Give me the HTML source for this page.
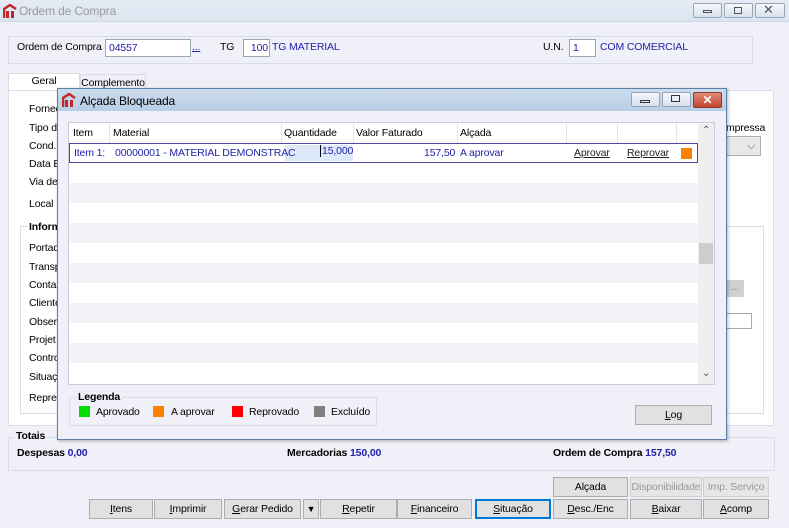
<!DOCTYPE html>
<html><head><meta charset="utf-8"><style>
*{box-sizing:border-box;margin:0;padding:0}
body{width:789px;height:528px;overflow:hidden;background:#f0f1f8;font-family:"Liberation Sans",sans-serif;font-size:10.5px;letter-spacing:-0.15px;color:#000;position:relative}
.a{position:absolute}
.blue{color:#2222aa}
.btn{position:absolute;height:20px;background:#e1e1e1;border:1px solid #adadad;text-align:center;line-height:18px;font-size:10.5px}
.btn.d{color:#9a9a9a;background:#e6e6e6;border-color:#cfcfcf}
.inp{position:absolute;background:#fff;border:1px solid #9aa;height:18px;line-height:16px;padding:0 3px}
.lbl{position:absolute}
.cb{position:absolute;width:21px;height:15px;border:1px solid #9aa5b8;border-radius:2px;background:linear-gradient(#f4f7fb,#d8e1ee)}
.logo{position:absolute;width:14px;height:14px}
</style></head><body>
<div class="a" style="left:0;top:0;width:789px;height:22px;background:linear-gradient(#e4ebf4,#dbe4f0);border-bottom:1px solid #d0d8e4"></div>
<svg class="logo" style="left:3px;top:4px" viewBox="0 0 14 14"><path d="M1 14V5L7 1l6 4" stroke="#c0282a" stroke-width="2.5" fill="none"/><rect x="3" y="7" width="3" height="7" fill="#c0282a"/><rect x="8" y="7" width="3" height="7" fill="#c0282a"/></svg>
<div class="a" style="left:19px;top:4px;font-size:12px;color:#9a9a9a">Ordem de Compra</div>
<div class="cb" style="left:693px;top:3px;width:29px"></div><div class="a" style="left:703px;top:10px;width:9px;height:3px;border:1px solid #555"></div>
<div class="cb" style="left:724px;top:3px;width:29px"></div><div class="a" style="left:734px;top:7px;width:8px;height:7px;border:1px solid #555"></div>
<div class="cb" style="left:755px;top:3px;width:30px"></div><div class="a" style="left:763px;top:2px;font-size:13px;color:#555">✕</div>

<div class="a" style="left:8px;top:36px;width:745px;height:28px;border:1px solid #dadde6"></div>
<div class="lbl" style="left:17px;top:41px">Ordem de Compra</div>
<div class="inp blue" style="left:105px;top:39px;width:86px">04557</div>
<div class="lbl blue" style="left:192px;top:41px;text-decoration:underline">...</div>
<div class="lbl" style="left:220px;top:41px">TG</div>
<div class="inp blue" style="left:243px;top:39px;width:27px;text-align:right;padding:0 1px">100</div>
<div class="lbl blue" style="left:272px;top:41px">TG MATERIAL</div>
<div class="lbl" style="left:543px;top:41px">U.N.</div>
<div class="inp blue" style="left:569px;top:39px;width:27px">1</div>
<div class="lbl blue" style="left:600px;top:41px">COM COMERCIAL</div>

<div class="a" style="left:8px;top:73px;width:72px;height:20px;background:#fff;border:1px solid #dadde6;border-bottom:none;text-align:center;line-height:15px">Geral</div>
<div class="a" style="left:80px;top:74px;width:66px;height:16px;border:1px solid #dadde6;text-align:center;line-height:17px">Complemento</div>
<div class="a" style="left:8px;top:90px;width:766px;height:336px;background:#fff;border:1px solid #dadde6"></div>
<div class="a" style="left:20px;top:226px;width:744px;height:188px;border:1px solid #dadde6"></div>
<div class="lbl" style="left:28px;top:221px;font-weight:bold;background:#fff;padding:0 1px">Inform</div>
<div class="lbl" style="left:29px;top:103px">Fornec</div>
<div class="lbl" style="left:29px;top:122px">Tipo de</div>
<div class="lbl" style="left:29px;top:140px">Cond.</div>
<div class="lbl" style="left:29px;top:158px">Data E</div>
<div class="lbl" style="left:29px;top:176px">Via de</div>
<div class="lbl" style="left:29px;top:198px">Local E</div>
<div class="lbl" style="left:29px;top:242px">Portad</div>
<div class="lbl" style="left:29px;top:261px">Transp</div>
<div class="lbl" style="left:29px;top:279px">Conta</div>
<div class="lbl" style="left:29px;top:297px">Cliente</div>
<div class="lbl" style="left:29px;top:316px">Observ</div>
<div class="lbl" style="left:29px;top:334px">Projet</div>
<div class="lbl" style="left:29px;top:352px">Contro</div>
<div class="lbl" style="left:29px;top:371px">Situaç</div>
<div class="lbl" style="left:29px;top:392px">Repres</div>
<div class="lbl" style="left:726px;top:122px">mpressa</div>
<div class="a" style="left:726px;top:136px;width:35px;height:20px;border:1px solid #adadad;background:#e8e8e8;color:#666;text-align:right;padding-right:5px;line-height:18px">⌵</div>
<div class="a" style="left:726px;top:280px;width:18px;height:17px;background:#d0d0d0;color:#888;line-height:14px;text-align:center">...</div>
<div class="a" style="left:726px;top:313px;width:26px;height:16px;background:#fff;border:1px solid #aaa"></div>

<div class="a" style="left:8px;top:437px;width:767px;height:34px;border:1px solid #dadde6"></div>
<div class="lbl" style="left:15px;top:430px;font-weight:bold;background:#f0f1f8;padding:0 1px">Totais</div>
<div class="lbl" style="left:17px;top:447px;font-weight:bold">Despesas <span class="blue">0,00</span></div>
<div class="lbl" style="left:287px;top:447px;font-weight:bold">Mercadorias <span class="blue">150,00</span></div>
<div class="lbl" style="left:553px;top:447px;font-weight:bold">Ordem de Compra <span class="blue">157,50</span></div>

<div class="btn" style="left:553px;top:477px;width:75px">Alçada</div>
<div class="btn d" style="left:630px;top:477px;width:72px">Disponibilidade</div>
<div class="btn d" style="left:703px;top:477px;width:66px">Imp. Serviço</div>
<div class="btn" style="left:89px;top:499px;width:64px"><u>I</u>tens</div>
<div class="btn" style="left:154px;top:499px;width:68px"><u>I</u>mprimir</div>
<div class="btn" style="left:224px;top:499px;width:77px"><u>G</u>erar Pedido</div>
<div class="btn" style="left:303px;top:499px;width:16px;font-size:9px">▼</div>
<div class="btn" style="left:320px;top:499px;width:77px"><u>R</u>epetir</div>
<div class="btn" style="left:397px;top:499px;width:75px"><u>F</u>inanceiro</div>
<div class="btn" style="left:475px;top:499px;width:76px;border:1px solid #0078d7;box-shadow:inset 0 0 0 1px #0078d7"><u>S</u>ituação</div>
<div class="btn" style="left:553px;top:499px;width:75px"><u>D</u>esc./Enc</div>
<div class="btn" style="left:630px;top:499px;width:72px"><u>B</u>aixar</div>
<div class="btn" style="left:703px;top:499px;width:66px"><u>A</u>comp</div>

<div class="a" style="left:57px;top:88px;width:670px;height:352px;background:#f0f1f8;border:1px solid #5a7fa8;box-shadow:1px 1px 3px rgba(0,0,0,.3)"></div>
<div class="a" style="left:58px;top:89px;width:668px;height:22px;background:linear-gradient(#cbdcee,#b9cde4)"></div>
<svg class="logo" style="left:62px;top:93px" viewBox="0 0 14 14"><path d="M1 14V5L7 1l6 4" stroke="#c0282a" stroke-width="2.5" fill="none"/><rect x="3" y="7" width="3" height="7" fill="#c0282a"/><rect x="8" y="7" width="3" height="7" fill="#c0282a"/></svg>
<div class="a" style="left:80px;top:94px;font-size:12px">Alçada Bloqueada</div>
<div class="cb" style="left:631px;top:92px;width:29px"></div><div class="a" style="left:640px;top:100px;width:10px;height:3px;border:1px solid #334"></div>
<div class="cb" style="left:662px;top:92px;width:29px"></div><div class="a" style="left:671px;top:95px;width:9px;height:7px;border:1px solid #334"></div>
<div class="a" style="left:693px;top:92px;width:29px;height:16px;border:1px solid #8a3a2c;border-radius:2px;background:linear-gradient(#e08a78,#c4452c);color:#fff;text-align:center;font-size:12px;line-height:15px;font-weight:bold">✕</div>

<div class="a" style="left:68px;top:122px;width:647px;height:263px;background:#fff;border:1px solid #c9ccd4;overflow:hidden">
 <div class="a" style="left:4px;top:4px">Item</div>
 <div class="a" style="left:44px;top:4px">Material</div>
 <div class="a" style="left:215px;top:4px">Quantidade</div>
 <div class="a" style="left:287px;top:4px">Valor Faturado</div>
 <div class="a" style="left:391px;top:4px">Alçada</div>
 <div class="a" style="left:40px;top:0;width:1px;height:20px;background:#e4e4e4"></div>
 <div class="a" style="left:212px;top:0;width:1px;height:20px;background:#e4e4e4"></div>
 <div class="a" style="left:284px;top:0;width:1px;height:20px;background:#e4e4e4"></div>
 <div class="a" style="left:388px;top:0;width:1px;height:20px;background:#e4e4e4"></div>
 <div class="a" style="left:497px;top:0;width:1px;height:20px;background:#e4e4e4"></div>
 <div class="a" style="left:548px;top:0;width:1px;height:20px;background:#e4e4e4"></div>
 <div class="a" style="left:607px;top:0;width:1px;height:20px;background:#e4e4e4"></div>
 <div class="a" style="left:0;top:20px;width:629px;height:20px;border:1px solid #4a4aa0;background:#fff"></div>
 <div class="a" style="left:216px;top:22px;width:68px;height:16px;background:#dde8f8"></div>
 <div class="a blue" style="left:5px;top:24px">Item 1:</div>
 <div class="a blue" style="left:46px;top:24px">00000001 - MATERIAL DEMONSTRAC</div>
 <div class="a blue" style="left:251px;top:22px;border-left:1px solid #000;padding-left:1px">15,000</div>
 <div class="a blue" style="left:355px;top:24px">157,50</div>
 <div class="a blue" style="left:391px;top:24px">A aprovar</div>
 <div class="a" style="left:505px;top:24px;text-decoration:underline;color:#222">Aprovar</div>
 <div class="a" style="left:558px;top:24px;text-decoration:underline;color:#222">Reprovar</div>
 <div class="a" style="left:612px;top:25px;width:11px;height:11px;background:#ff8000"></div>
 <div class="a" style="left:0;top:60px;width:629px;height:20px;background:#f2f3f9"></div>
 <div class="a" style="left:0;top:100px;width:629px;height:20px;background:#f2f3f9"></div>
 <div class="a" style="left:0;top:140px;width:629px;height:20px;background:#f2f3f9"></div>
 <div class="a" style="left:0;top:180px;width:629px;height:20px;background:#f2f3f9"></div>
 <div class="a" style="left:0;top:220px;width:629px;height:20px;background:#f2f3f9"></div>
 <div class="a" style="left:629px;top:0;width:17px;height:262px;background:#efefef"></div>
 <div class="a" style="left:630px;top:120px;width:14px;height:21px;background:#cdcdcd"></div>
 <div class="a" style="left:633px;top:2px;color:#555;font-size:10px">⌃</div>
 <div class="a" style="left:633px;top:245px;color:#555;font-size:10px">⌄</div>
</div>

<div class="a" style="left:69px;top:397px;width:308px;height:29px;border:1px solid #dadde6"></div>
<div class="lbl" style="left:77px;top:391px;font-weight:bold;background:#f0f1f8;padding:0 1px">Legenda</div>
<div class="a" style="left:79px;top:406px;width:11px;height:11px;background:#00dd00"></div><div class="lbl" style="left:96px;top:406px">Aprovado</div>
<div class="a" style="left:153px;top:406px;width:11px;height:11px;background:#ff8000"></div><div class="lbl" style="left:171px;top:406px">A aprovar</div>
<div class="a" style="left:232px;top:406px;width:11px;height:11px;background:#ff0000"></div><div class="lbl" style="left:249px;top:406px">Reprovado</div>
<div class="a" style="left:314px;top:406px;width:11px;height:11px;background:#808080"></div><div class="lbl" style="left:331px;top:406px">Excluído</div>
<div class="btn" style="left:635px;top:405px;width:77px"><u>L</u>og</div>
</body></html>
